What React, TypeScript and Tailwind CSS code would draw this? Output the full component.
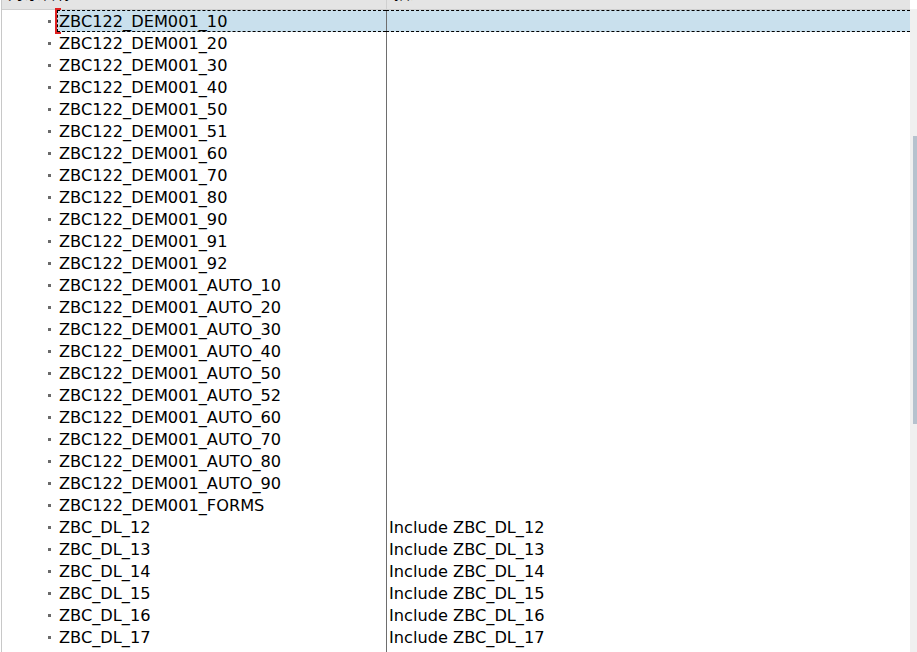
const rows: { name: string; desc: string }[] = [
  ...["10", "20", "30", "40", "50", "51", "60", "70", "80", "90", "91", "92"].map((n) => ({ name: `ZBC122_DEM001_${n}`, desc: "" })),
  ...["10", "20", "30", "40", "50", "52", "60", "70", "80", "90"].map((n) => ({ name: `ZBC122_DEM001_AUTO_${n}`, desc: "" })),
  { name: "ZBC122_DEM001_FORMS", desc: "" },
  ...["12", "13", "14", "15", "16", "17", "18"].map((n) => ({ name: `ZBC_DL_${n}`, desc: `Include ZBC_DL_${n}` })),
]

export default function App() {
  return (
    <div className="relative h-[652px] w-[917px] overflow-hidden bg-white text-[16.2px] text-black [font-family:'DejaVu_Sans','Noto_Sans_CJK_SC',sans-serif]">
      <div className="flex h-full">
        <div className="ml-px flex-1 border-l border-[#c8c8c8]">
          {/* header, mostly scrolled off the top */}
          <div className="-mt-[17px] flex h-[27px] border-b border-[#cfcfcf] bg-[#e4e4e4]">
            <div className="w-[384px] shrink-0 pl-[6px] leading-[22px]">对象名称</div>
            <div className="flex-1 border-l border-[#d0d0d0] pl-[7px] leading-[22px]">描述</div>
          </div>
          {rows.map((r, i) => {
            const sel = i === 0
            return (
              <div key={r.name} className="relative flex h-[22px] leading-[22px]">
                <div className="flex w-[384px] shrink-0 items-center">
                  <span className="ml-[46px] mr-[6px] h-[3px] w-[3px] shrink-0 bg-[#6a6a6a]" />
                  <div
                    className={
                      sel
                        ? "flex h-[22px] flex-1 items-center border-y border-l border-dashed border-black bg-[#c9e0ed] pt-[1px] pl-[1px]"
                        : "flex h-[22px] flex-1 items-center pt-[2px] pl-[2px]"
                    }
                  >
                    {r.name}
                  </div>
                </div>
                <div
                  className={
                    sel
                      ? "h-[22px] flex-1 border-y border-dashed border-black bg-[#c9e0ed]"
                      : "h-[22px] flex-1"
                  }
                >
                  <div className="flex h-full items-center border-l border-[#6e6e6e] pt-[2px] pl-[2px]">{r.desc}</div>
                </div>
                {sel && (
                  <span className="absolute left-[53px] top-[-2px] h-[26px] w-[6px] border-y-2 border-l-2 border-[#e02020]" />
                )}
              </div>
            )
          })}
        </div>
        {/* vertical scrollbar */}
        <div className="relative mt-[9px] w-[7px] shrink-0 bg-[#f0f0f0]">
          <div className="absolute left-[3px] top-[127px] h-[288px] w-[4px] bg-[#b6c2ce]" />
        </div>
      </div>
    </div>
  )
}
